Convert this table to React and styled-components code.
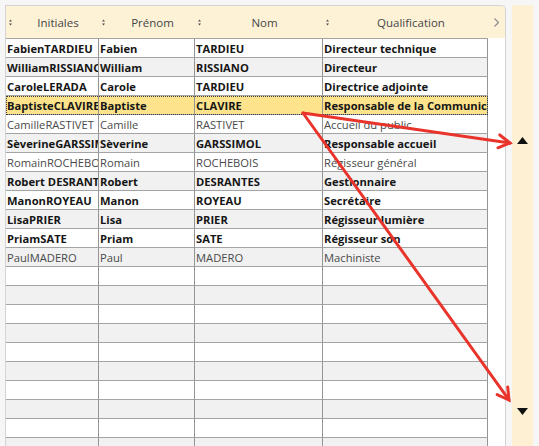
import React from "react";
import styled, { createGlobalStyle } from "styled-components";

const GlobalStyle = createGlobalStyle`
  html, body {
    margin: 0;
    padding: 0;
  }
  body {
    background: #f6f6f6;
    font-family: "Open Sans", "DejaVu Sans", sans-serif;
  }
`;

// column widths, border included
const COLS = [93, 96, 128, 165];
const HEADS = ["Initiales", "Prénom", "Nom", "Qualification"];

const people = [
  ["FabienTARDIEU", "Fabien", "TARDIEU", "Directeur technique", true],
  ["WilliamRISSIANO", "William", "RISSIANO", "Directeur", true],
  ["CaroleLERADA", "Carole", "TARDIEU", "Directrice adjointe", true],
  ["BaptisteCLAVIRE", "Baptiste", "CLAVIRE", "Responsable de la Communication", true],
  ["CamilleRASTIVET", "Camille", "RASTIVET", "Accueil du public", false],
  ["SèverineGARSSIMOL", "Sèverine", "GARSSIMOL", "Responsable accueil", true],
  ["RomainROCHEBOIS", "Romain", "ROCHEBOIS", "Régisseur général", false],
  ["Robert DESRANTES", "Robert", "DESRANTES", "Gestionnaire", true],
  ["ManonROYEAU", "Manon", "ROYEAU", "Secrétaire", true],
  ["LisaPRIER", "Lisa", "PRIER", "Régisseur lumière", true],
  ["PriamSATE", "Priam", "SATE", "Régisseur son", true],
  ["PaulMADERO", "Paul", "MADERO", "Machiniste", false],
];

const SELECTED = 3;
const TOTAL_ROWS = 24;

const Page = styled.div`
  position: relative;
  display: flex;
  width: 539px;
  height: 446px;
  padding: 5px 0 0 5px;
  box-sizing: border-box;
  overflow: hidden;
  background: #f6f6f6;
`;

const Panel = styled.div`
  display: flex;
  flex-direction: column;
  width: 501px;
  flex: none;
  box-sizing: border-box;
  border: 1px solid #d4d4d4;
  border-bottom: none;
  border-top-right-radius: 5px;
  background: #fff;
  overflow: hidden;
`;

const Header = styled.div`
  display: flex;
  height: 32px;
  flex: none;
  background: #fdf1d6;
`;

const HeadCell = styled.div`
  display: flex;
  align-items: center;
  width: ${(p) => p.$w}px;
  flex: none;
  box-sizing: border-box;
  padding-left: 3px;
  color: #474747;
  font-size: 11.5px;
`;

const HeadLabel = styled.span`
  flex: 1;
  text-align: center;
  white-space: nowrap;
`;

const HeadEnd = styled.div`
  flex: 1;
  display: flex;
  align-items: center;
  justify-content: center;
`;

const Grid = styled.div`
  width: 482px;
  flex: 1;
  border-top: 1px solid #a4a4a4;
  overflow: hidden;
`;

const Row = styled.div`
  display: flex;
  height: 19px;
  background: ${(p) => (p.$selected ? "#fde48c" : p.$odd ? "#f1f1f1" : "#fff")};
  outline: ${(p) => (p.$selected ? "1px dotted #3a3a3a" : "none")};
  outline-offset: -1px;
`;

const Cell = styled.div`
  width: ${(p) => p.$w}px;
  flex: none;
  box-sizing: border-box;
  padding-left: 1px;
  border-right: 1px solid #959595;
  border-bottom: 1px solid #a4a4a4;
  font-size: 11.2px;
  line-height: 19px;
  font-weight: ${(p) => (p.$bold ? 700 : 400)};
  color: ${(p) => (p.$bold ? "#161616" : "#4a4a4a")};
  white-space: nowrap;
  overflow: hidden;
  text-overflow: clip;
`;

const Strip = styled.div`
  width: 21px;
  margin-left: 6px;
  flex: none;
  display: flex;
  flex-direction: column;
  align-items: center;
  justify-content: space-between;
  padding: 132px 0 31px;
  box-sizing: border-box;
  background: #fdf0d3;
`;

const Overlay = styled.svg`
  position: absolute;
  top: 0;
  left: 0;
  pointer-events: none;
`;

const SortIcon = () => (
  <svg width="3" height="7" viewBox="0 0 3 7" style={{ marginRight: 5, flex: "none" }}>
    <polygon points="0,2.5 1.5,0.5 3,2.5" fill="#555" />
    <polygon points="0,4.5 1.5,6.5 3,4.5" fill="#555" />
  </svg>
);

const Triangle = ({ down }) => (
  <svg width="11" height="7" viewBox="0 0 11 7">
    <polygon points={down ? "0,0 11,0 5.5,7" : "0,7 11,7 5.5,0"} fill="#111" />
  </svg>
);

const Arrow = ({ x1, y1, x2, y2 }) => {
  const len = Math.hypot(x2 - x1, y2 - y1);
  const bx = (x1 - x2) / len;
  const by = (y1 - y2) / len;
  const c = Math.cos(Math.PI / 6);
  const s = Math.sin(Math.PI / 6);
  const w = 13;
  const a = [x2 + w * (bx * c - by * s), y2 + w * (bx * s + by * c)];
  const b = [x2 + w * (bx * c + by * s), y2 + w * (-bx * s + by * c)];
  return (
    <g stroke="#e8342b" strokeWidth="3" strokeLinecap="round" fill="none">
      <line x1={x1} y1={y1} x2={x2} y2={y2} />
      <polyline points={`${a[0]},${a[1]} ${x2},${y2} ${b[0]},${b[1]}`} />
    </g>
  );
};

const App = () => {
  const rows = Array.from({ length: TOTAL_ROWS }, (_, i) => people[i] || null);

  return (
    <Page>
      <GlobalStyle />
      <Panel>
        <Header>
          {HEADS.map((h, i) => (
            <HeadCell key={h} $w={COLS[i]}>
              <SortIcon />
              <HeadLabel>{h}</HeadLabel>
            </HeadCell>
          ))}
          <HeadEnd>
            <svg width="5" height="9" viewBox="0 0 5 9">
              <polyline points="0.5,0.5 4.5,4.5 0.5,8.5" stroke="#8a8a8a" strokeWidth="1.2" fill="none" />
            </svg>
          </HeadEnd>
        </Header>
        <Grid>
          {rows.map((r, i) => (
            <Row key={i} $odd={i % 2 === 1} $selected={i === SELECTED}>
              {COLS.map((w, c) => (
                <Cell key={c} $w={w} $bold={r ? r[4] : false}>
                  {r ? r[c] : ""}
                </Cell>
              ))}
            </Row>
          ))}
        </Grid>
      </Panel>
      <Strip>
        <Triangle />
        <Triangle down />
      </Strip>
      <Overlay width="539" height="446">
        <Arrow x1={303} y1={113} x2={510} y2={143} />
        <Arrow x1={303} y1={113} x2={509} y2={400} />
      </Overlay>
    </Page>
  );
};

export default App;
